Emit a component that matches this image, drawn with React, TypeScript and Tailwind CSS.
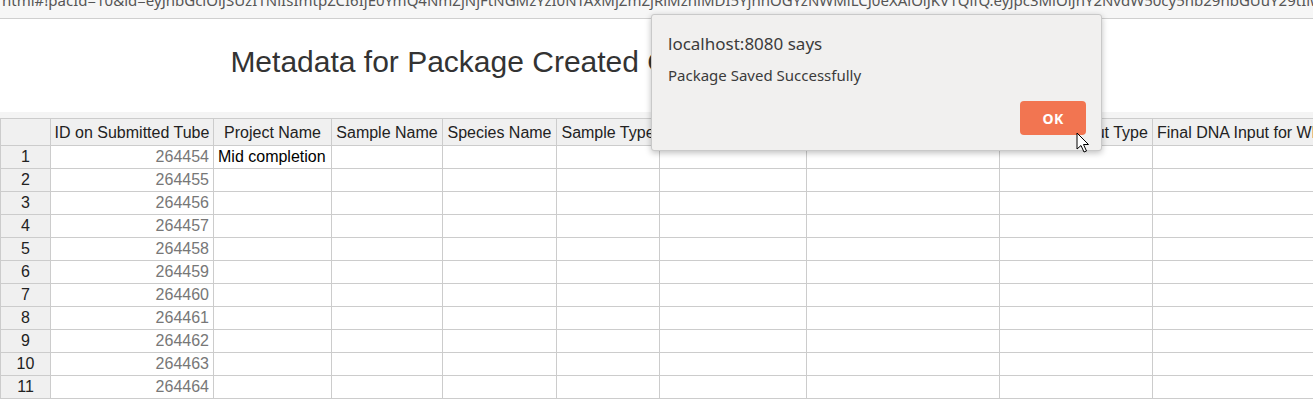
import React from "react";

const columns = [
  { name: "", w: "w-[51px]" },
  { name: "ID on Submitted Tube", w: "w-[163px]" },
  { name: "Project Name", w: "w-[118px]" },
  { name: "Sample Name", w: "w-[111px]" },
  { name: "Species Name", w: "w-[114px]" },
  { name: "Sample Type", w: "w-[103px]" },
  { name: "Tissue Type", w: "w-[147px]" },
  { name: "Extraction Method", w: "w-[193px]" },
  { name: "Template Input Type", w: "w-[153px]" },
  { name: "Final DNA Input for Whole Genome (ng)", w: "w-[380px]" },
];

const rows = Array.from({ length: 11 }, (_, i) => ({
  n: i + 1,
  id: 264454 + i,
  project: i === 0 ? "Mid completion" : "",
}));

const urlText =
  "html#!pacId=10&id=eyJhbGciOiJSUzI1NiIsImtpZCI6IjE0YmQ4NmZjNjFtNGMzYzI0NTAxMjZmZjRlMzhlMDI5YjhhOGYzNWMiLCJ0eXAiOiJKV1QifQ.eyJpc3MiOiJhY2NvdW50cy5nb29nbGUuY29tIiwiYXpwIjoiNjY";

function Cursor() {
  return (
    <svg width="14" height="22" viewBox="0 0 14 22" className="absolute left-[1076px] top-[132px]">
      <path
        d="M1 1 L1 17 L5 13.5 L8 20 L10.5 19 L7.5 12.5 L12.5 12.5 Z"
        fill="#fff"
        stroke="#000"
        strokeWidth="1"
        strokeLinejoin="round"
      />
    </svg>
  );
}

function AlertDialog() {
  return (
    <div className="absolute left-[651px] top-[14px] w-[451px] h-[137px] bg-[#f1f0ef] border border-[#c9c9c9] rounded-[3px] shadow-[0_2px_6px_rgba(0,0,0,0.25)] font-['Noto_Sans',sans-serif] flex flex-col">
      <div className="pl-[16px] pt-[17px] text-[17px] leading-[24px] text-[#3b3b3b]">localhost:8080 says</div>
      <div className="pl-[16px] pt-[9px] text-[15px] leading-[20px] text-[#3b3b3b]">Package Saved Successfully</div>
      <div className="flex justify-end pr-[15px] mt-auto pb-[15px]">
        <button className="w-[66px] h-[34px] rounded-[4px] bg-[#f27551] text-white text-[14px] font-bold tracking-wide">
          OK
        </button>
      </div>
    </div>
  );
}

export default function App() {
  return (
    <div className="relative w-[1313px] h-[410px] overflow-hidden bg-white font-['Liberation_Sans',Arial,sans-serif]">
      <div className="h-[19px] bg-[#f6f6f6] border-b border-[#cfcfcf] overflow-hidden">
        <div className="-mt-[10px] pl-[2px] whitespace-nowrap text-[15px] leading-[20px] text-[#555] font-['Noto_Sans',sans-serif]">
          {urlText}
        </div>
      </div>

      <div className="h-[93px] flex items-center justify-center pb-[8px]">
        <h1 className="text-[30px] text-[#333] whitespace-nowrap">
          Metadata for Package Created On 12th June 2018 14:32:07 IST
        </h1>
      </div>
      <div className="h-[6px] bg-[#f4f4f4]" />

      <div className="text-[16px] whitespace-nowrap">
        <div className="flex border-t border-[#ccc]">
          {columns.map((c, i) => (
            <div
              key={i}
              className={`${c.w} shrink-0 h-[27px] bg-[#f0f0f0] border-r border-b border-[#ccc] text-[#222] leading-[27px] overflow-hidden ${
                i === 0 ? "border-l" : ""
              } ${i === columns.length - 1 ? "text-left pl-[4px]" : "text-center"}`}
            >
              {c.name}
            </div>
          ))}
        </div>
        {rows.map((r) => (
          <div key={r.n} className="flex">
            <div className="w-[51px] shrink-0 h-[23px] bg-[#f0f0f0] border-l border-r border-b border-[#ccc] text-center text-[#222] leading-[22px]">
              {r.n}
            </div>
            <div className="w-[163px] shrink-0 h-[23px] border-r border-b border-[#ccc] text-right pr-[4px] text-[#777] leading-[22px]">
              {r.id}
            </div>
            <div className="w-[118px] shrink-0 h-[23px] border-r border-b border-[#ccc] pl-[4px] text-black leading-[22px]">
              {r.project}
            </div>
            {columns.slice(3).map((c, i) => (
              <div key={i} className={`${c.w} shrink-0 h-[23px] border-r border-b border-[#ccc]`} />
            ))}
          </div>
        ))}
      </div>

      <AlertDialog />
      <Cursor />
    </div>
  );
}
